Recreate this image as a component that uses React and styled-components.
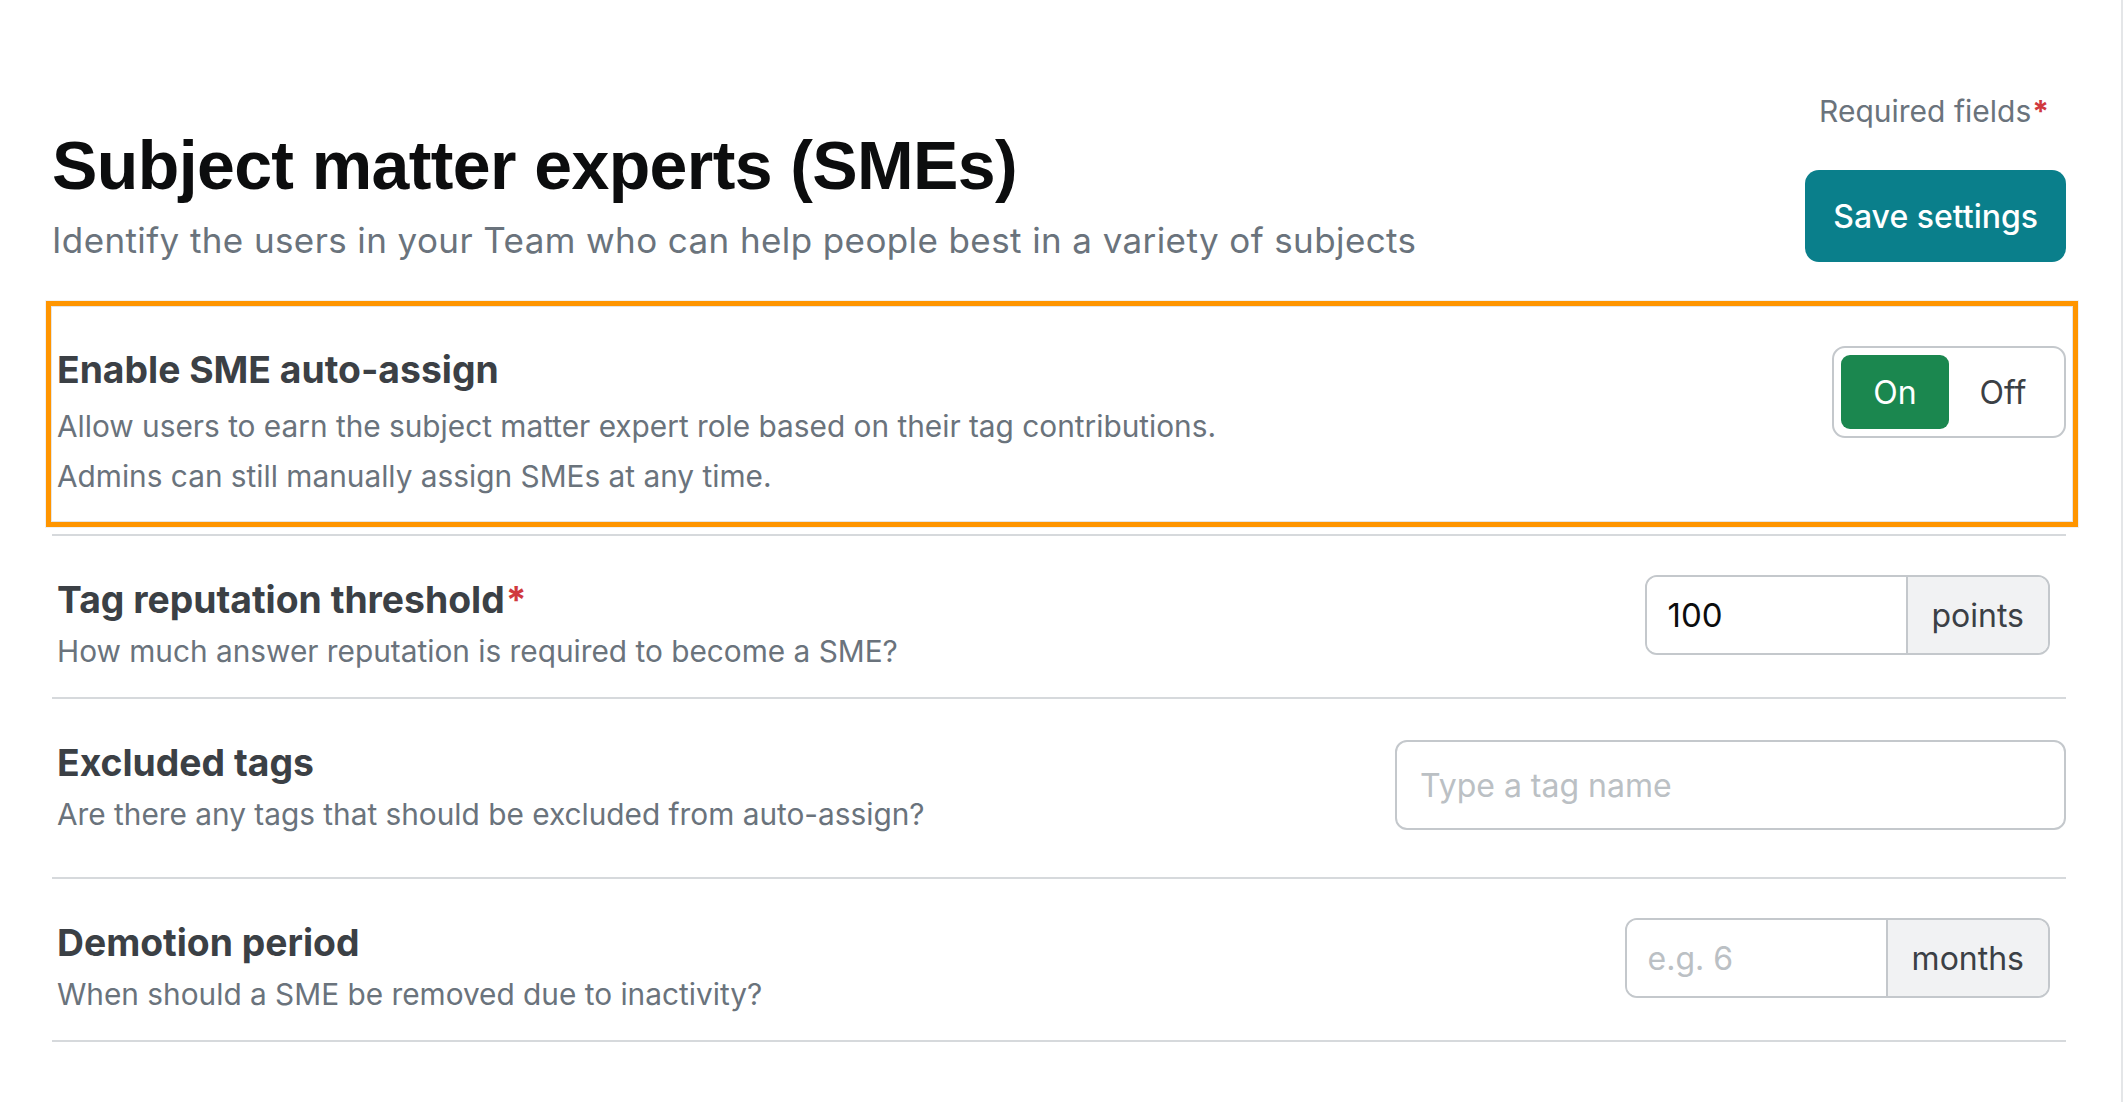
import React from 'react';
import styled, { createGlobalStyle } from 'styled-components';

const GlobalStyle = createGlobalStyle`
  html, body { margin: 0; padding: 0; background: #fff; }
  body { font-family: Inter, "Liberation Sans", Arial, sans-serif; color: #3b4045; }
  *, *::before, *::after { box-sizing: border-box; }
`;

const Page = styled.div`
  display: flex;
  min-height: 100vh;
  background: #fff;
`;

const Main = styled.main`
  box-sizing: content-box;
  width: 2014px;
  padding: 93px 55px 0 52px;
  border-right: 2px solid #e4e6e8;
  min-height: calc(100vh - 93px);
`;

const Header = styled.header`
  display: flex;
  justify-content: space-between;
  align-items: flex-start;
`;

const HeaderText = styled.div`
  margin-top: 31px;
`;

const Title = styled.h1`
  margin: 0;
  font-family: "Liberation Sans", Arial, sans-serif;
  font-size: 68px;
  line-height: 82px;
  font-weight: 700;
  letter-spacing: -0.6px;
  color: #0c0d0e;
`;

const Subtitle = styled.p`
  margin: 11px 0 0;
  font-size: 35px;
  line-height: 46px;
  letter-spacing: 0.4px;
  color: #6a737c;
`;

const HeaderActions = styled.div`
  display: flex;
  flex-direction: column;
  align-items: flex-end;
`;

const RequiredNote = styled.span`
  margin-right: 17px;
  font-size: 30px;
  line-height: 36px;
  color: #6a737c;
`;

const Asterisk = styled.span`
  color: #d0393e;
  font-weight: 700;
  margin-left: 1px;
`;

const SaveButton = styled.button`
  margin-top: 41px;
  height: 92px;
  padding: 0 28px;
  border: none;
  border-radius: 14px;
  background: #0a7f8b;
  color: #fff;
  font-family: Inter, "Liberation Sans", Arial, sans-serif;
  font-size: 32px;
  font-weight: 500;
  cursor: pointer;
`;

const Settings = styled.section`
  margin-top: 38px;
`;

const Highlight = styled.div`
  margin: 0 -12px 0 -6px;
  padding: 0 7px 0 1px;
  border: 5px solid #ff9500;
  box-shadow: 0 0 0 1px rgba(0, 0, 0, 0.06), inset 0 0 0 1px rgba(0, 0, 0, 0.1);
`;

const Divider = styled.hr`
  margin: 7px 0 0;
  border: none;
  height: 2px;
  background: #d6d9dc;
`;

const Row = styled.div`
  display: flex;
  justify-content: space-between;
  align-items: flex-start;
  gap: 40px;
  padding: 42px 0 26px 5px;
  border-bottom: ${(p) => (p.$divided ? '2px solid #d6d9dc' : 'none')};
`;

const RowText = styled.div`
  display: flex;
  flex-direction: column;
`;

const RowTitle = styled.h2`
  margin: 0;
  font-size: 37.3px;
  line-height: 44px;
  font-weight: 700;
  color: #3b4045;
`;

const RowDesc = styled.p`
  margin: ${(p) => (p.$gap ? `${p.$gap}px` : '9px')} 0 0;
  font-size: 29.8px;
  line-height: 40px;
  color: #6a737c;
`;

const Toggle = styled.div`
  display: flex;
  flex-shrink: 0;
  margin-top: -2px;
  padding: 7px;
  border: 2px solid #c4c8cc;
  border-radius: 13px;
  background: #fff;
`;

const ToggleOption = styled.button`
  width: 108px;
  height: 74px;
  padding: 0;
  border: none;
  border-radius: 9px;
  background: ${(p) => (p.$active ? '#1b874f' : 'transparent')};
  color: ${(p) => (p.$active ? '#fff' : '#3b4045')};
  font-family: Inter, "Liberation Sans", Arial, sans-serif;
  font-size: 32px;
  cursor: pointer;
`;

const InputGroup = styled.div`
  display: flex;
  flex-shrink: 0;
  height: 80px;
  margin: -3px 16px 0 0;
  border: 2px solid #c4c8cc;
  border-radius: 12px;
  overflow: hidden;
`;

const GroupInput = styled.input`
  width: 259px;
  padding: 0 21px;
  border: none;
  outline: none;
  background: #fff;
  font-family: Inter, "Liberation Sans", Arial, sans-serif;
  font-size: 33px;
  color: #0c0d0e;
  &::placeholder { color: #bbc0c4; font-size: 32px; }
`;

const Addon = styled.span`
  display: flex;
  align-items: center;
  padding: 0 24px;
  border-left: 2px solid #c4c8cc;
  background: #f1f2f3;
  font-size: 32px;
  color: #3b4045;
`;

const TagInput = styled.input`
  flex-shrink: 0;
  width: 671px;
  height: 90px;
  margin: -1px 0 21px;
  padding: 0 23px;
  border: 2px solid #c4c8cc;
  border-radius: 12px;
  outline: none;
  background: #fff;
  font-family: Inter, "Liberation Sans", Arial, sans-serif;
  font-size: 32px;
  color: #0c0d0e;
  &::placeholder { color: #bbc0c4; }
`;

export default function App() {
  return (
    <>
      <GlobalStyle />
      <Page>
        <Main>
          <Header>
            <HeaderText>
              <Title>Subject matter experts (SMEs)</Title>
              <Subtitle>Identify the users in your Team who can help people best in a variety of subjects</Subtitle>
            </HeaderText>
            <HeaderActions>
              <RequiredNote>
                Required fields<Asterisk>*</Asterisk>
              </RequiredNote>
              <SaveButton type="button">Save settings</SaveButton>
            </HeaderActions>
          </Header>

          <Settings>
            <Highlight>
              <Row>
                <RowText>
                  <RowTitle>Enable SME auto-assign</RowTitle>
                  <RowDesc $gap={14}>Allow users to earn the subject matter expert role based on their tag contributions.</RowDesc>
                  <RowDesc $gap={10}>Admins can still manually assign SMEs at any time.</RowDesc>
                </RowText>
                <Toggle>
                  <ToggleOption type="button" $active>On</ToggleOption>
                  <ToggleOption type="button">Off</ToggleOption>
                </Toggle>
              </Row>
            </Highlight>
            <Divider />

            <Row $divided>
              <RowText>
                <RowTitle>
                  Tag reputation threshold<Asterisk>*</Asterisk>
                </RowTitle>
                <RowDesc>How much answer reputation is required to become a SME?</RowDesc>
              </RowText>
              <InputGroup>
                <GroupInput defaultValue="100" />
                <Addon>points</Addon>
              </InputGroup>
            </Row>

            <Row $divided>
              <RowText>
                <RowTitle>Excluded tags</RowTitle>
                <RowDesc>Are there any tags that should be excluded from auto-assign?</RowDesc>
              </RowText>
              <TagInput placeholder="Type a tag name" />
            </Row>

            <Row $divided>
              <RowText>
                <RowTitle>Demotion period</RowTitle>
                <RowDesc>When should a SME be removed due to inactivity?</RowDesc>
              </RowText>
              <InputGroup>
                <GroupInput placeholder="e.g. 6" />
                <Addon>months</Addon>
              </InputGroup>
            </Row>
          </Settings>
        </Main>
      </Page>
    </>
  );
}
